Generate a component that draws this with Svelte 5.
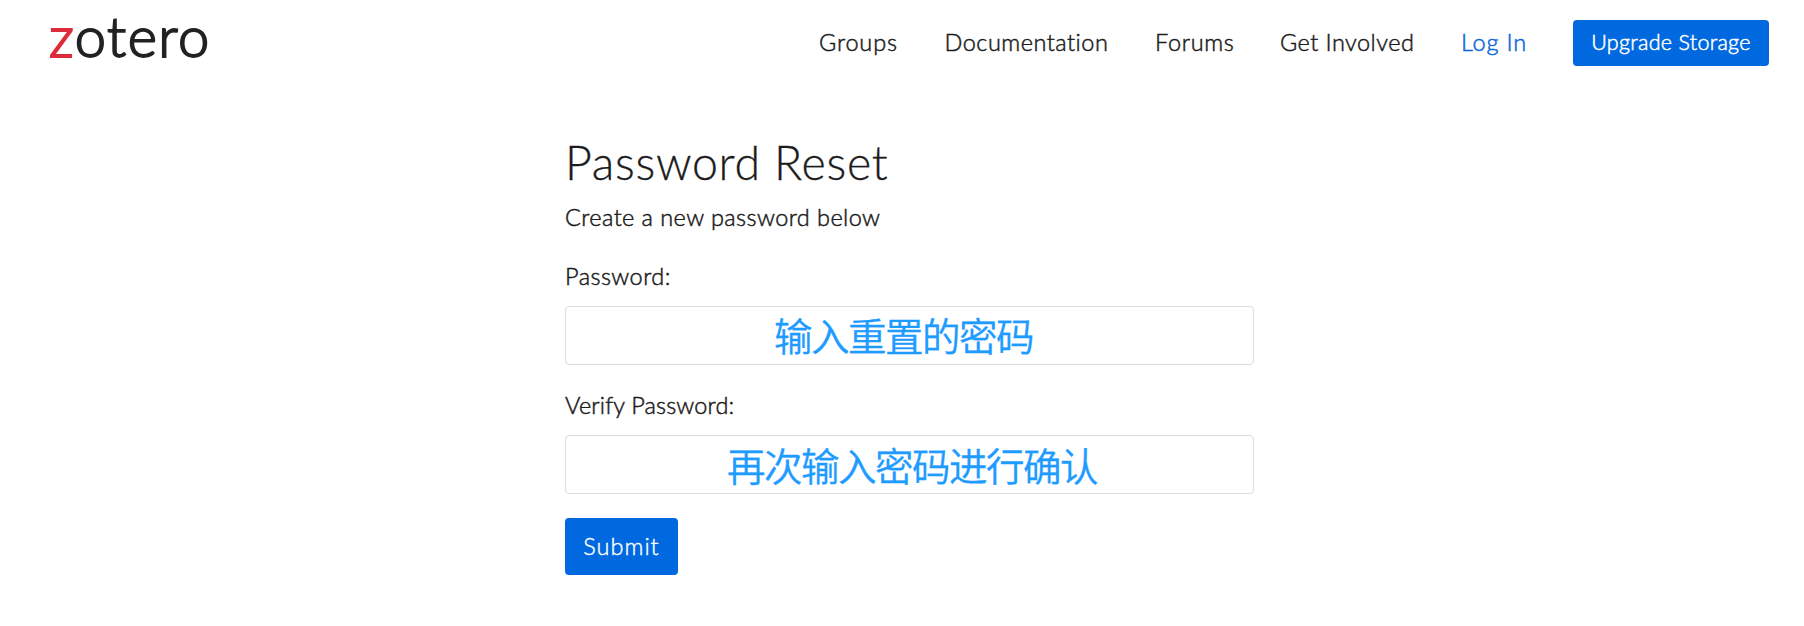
<script>
  const links = [
    { label: 'Groups', spacing: 0.85 },
    { label: 'Documentation', spacing: 0.5 },
    { label: 'Forums', spacing: 0.65 },
    { label: 'Get Involved', spacing: 0.45 },
    { label: 'Log In', spacing: 0.8, accent: true },
  ];
</script>

<header>
  <a class="logo" href="#home"><span>z</span>otero</a>
  <nav>
    {#each links as link}
      <a href="#nav" class:accent={link.accent} style="letter-spacing: {link.spacing}px">{link.label}</a>
    {/each}
    <a class="upgrade" href="#storage">Upgrade Storage</a>
  </nav>
</header>

<main>
  <h1>Password Reset</h1>
  <p>Create a new password below</p>
  <form>
    <div class="label">Password:</div>
    <div class="field first">输入重置的密码</div>
    <div class="label verify">Verify Password:</div>
    <div class="field second">再次输入密码进行确认</div>
    <button type="button">Submit</button>
  </form>
</main>

<style>
  :global(body) {
    background: #fff;
    color: #1c1c1c;
    font-family: Lato, sans-serif;
    font-size: 23.5px;
    font-weight: 300;
    line-height: 34px;
    -webkit-text-stroke: 0.5px currentColor;
  }
  header {
    display: flex;
    justify-content: space-between;
    height: 86px;
    padding: 0 35px 0 49px;
    box-sizing: border-box;
    white-space: nowrap;
  }
  a {
    color: inherit;
    text-decoration: none;
    -webkit-text-stroke-color: currentColor;
  }
  .logo {
    color: #222;
    font-size: 56px;
    line-height: 72px;
    letter-spacing: 1.5px;
    -webkit-text-stroke: 1.8px currentColor;
  }
  .logo span {
    color: #dc2c3a;
    -webkit-text-stroke-color: currentColor;
  }
  nav {
    display: grid;
    grid-template-columns: 78.5px 163.5px 78px 134px 65px 196px;
    column-gap: 47px;
    padding-top: 20px;
    height: 46px;
    line-height: 44px;
  }
  .accent {
    color: #0a66dd;
  }
  .upgrade {
    height: 46px;
    background: #0069e0;
    color: #fff;
    border-radius: 4px;
    text-align: center;
    font-size: 21.5px;
    letter-spacing: 0.3px;
  }
  main {
    width: 689px;
    padding-left: 565px;
  }
  h1 {
    margin: 0;
    padding-top: 48px;
    font-size: 46.5px;
    line-height: 56px;
    font-weight: 300;
    letter-spacing: 0.7px;
    -webkit-text-stroke: 0.3px currentColor;
  }
  p {
    margin: 10px 0 25px;
    letter-spacing: 0.43px;
  }
  .label {
    letter-spacing: 0.45px;
    margin-bottom: 13px;
  }
  .verify {
    letter-spacing: 0.15px;
    margin-top: 23px;
  }
  .field {
    height: 59px;
    box-sizing: border-box;
    border: 1px solid #dcdcdc;
    border-radius: 4px;
    color: #1e9bff;
    font-family: "Noto Sans CJK SC", sans-serif;
    font-weight: 350;
    font-size: 38.5px;
    letter-spacing: -1.5px;
    white-space: nowrap;
    -webkit-text-stroke: 0.35px currentColor;
  }
  .first {
    padding-left: 208px;
    line-height: 55px;
  }
  .second {
    padding-left: 161px;
    line-height: 57px;
  }
  button {
    display: block;
    margin-top: 24px;
    width: 113px;
    height: 57px;
    border: 0;
    border-radius: 4px;
    padding: 0 0 2px;
    background: #0069e0;
    color: #fff;
    font: inherit;
    letter-spacing: 1px;
    -webkit-text-stroke: 0.4px currentColor;
  }
</style>
